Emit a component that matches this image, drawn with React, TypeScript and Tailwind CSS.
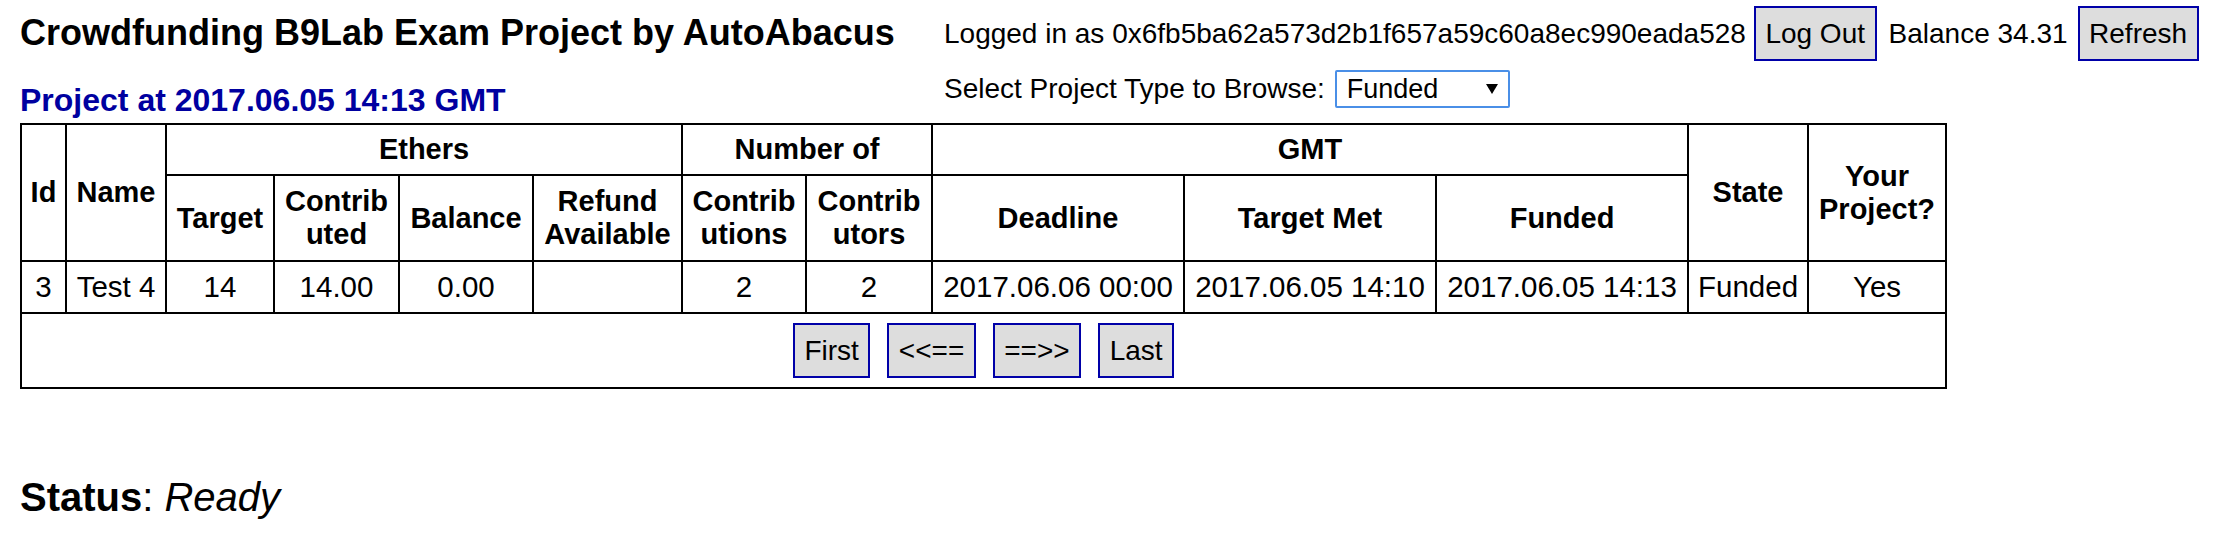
import React from 'react'

const FONT = "font-['Liberation_Sans',Arial,Helvetica,sans-serif]"

function Btn({ children }: { children: React.ReactNode }) {
  return (
    <button className="bg-[#dddddd] border-2 border-[#0000a8] px-[9.5px] py-[9.5px] leading-[32px] text-[28px] text-black">
      {children}
    </button>
  )
}

const cell = 'border-2 border-black text-center align-middle px-[2px] py-0 whitespace-nowrap text-[29.5px]'
const head = 'border-2 border-black text-center align-middle px-[2px] py-0 whitespace-nowrap text-[29px] font-bold'

export default function App() {
  return (
    <div className={`${FONT} text-[28px] leading-[normal] text-black bg-white pl-[20px] pt-[6px] pb-[40px]`}>
      {/* top: title on the left, account + browse on the right */}
      <div className="flex">
        <div className="w-[924px] shrink-0">
          <h1 className="mt-[6px] text-[36px] font-bold leading-[normal]">
            Crowdfunding B9Lab Exam Project by AutoAbacus
          </h1>
          <h2 className="mt-[28px] text-[32px] font-bold leading-[normal] text-[#0000a0]">
            Project at 2017.06.05 14:13 GMT
          </h2>
        </div>
        <div className="flex flex-col">
          <div className="flex items-baseline whitespace-nowrap">
            <span>Logged in as 0x6fb5ba62a573d2b1f657a59c60a8ec990eada528</span>
            <span className="ml-[8px]"><Btn>Log Out</Btn></span>
            <span className="ml-[12px]">Balance 34.31</span>
            <span className="ml-[10px]"><Btn>Refresh</Btn></span>
          </div>
          <div className="mt-[9px] flex items-baseline whitespace-nowrap">
            <span>Select Project Type to Browse:</span>
            <div className="ml-[10px] inline-flex items-center h-[38px] w-[175px] border-2 border-[#4a8fe7] rounded-[2px] pl-[10px] pr-[10px] text-[27px] bg-white">
              <span className="flex-1">Funded</span>
              <svg width="12" height="10" viewBox="0 0 12 10" className="shrink-0">
                <polygon points="0,0 12,0 6,10" fill="#000" />
              </svg>
            </div>
          </div>
        </div>
      </div>

      <table className="mt-[4px] table-fixed border-collapse w-[1927px] border-2 border-black">
        <colgroup>
          <col className="w-[45px]" />
          <col className="w-[100px]" />
          <col className="w-[108px]" />
          <col className="w-[125px]" />
          <col className="w-[134px]" />
          <col className="w-[149px]" />
          <col className="w-[124px]" />
          <col className="w-[126px]" />
          <col className="w-[252px]" />
          <col className="w-[252px]" />
          <col className="w-[252px]" />
          <col className="w-[120px]" />
          <col className="w-[138px]" />
        </colgroup>
        <thead>
          <tr className="h-[51px]">
            <th rowSpan={2} className={head}>Id</th>
            <th rowSpan={2} className={head}>Name</th>
            <th colSpan={4} className={head}>Ethers</th>
            <th colSpan={2} className={head}>Number of</th>
            <th colSpan={3} className={head}>GMT</th>
            <th rowSpan={2} className={head}>State</th>
            <th rowSpan={2} className={head}>Your<br />Project?</th>
          </tr>
          <tr className="h-[86px]">
            <th className={head}>Target</th>
            <th className={head}>Contrib<br />uted</th>
            <th className={head}>Balance</th>
            <th className={head}>Refund<br />Available</th>
            <th className={head}>Contrib<br />utions</th>
            <th className={head}>Contrib<br />utors</th>
            <th className={head}>Deadline</th>
            <th className={head}>Target Met</th>
            <th className={head}>Funded</th>
          </tr>
        </thead>
        <tbody>
          <tr className="h-[52px]">
            <td className={cell}>3</td>
            <td className={cell}>Test 4</td>
            <td className={cell}>14</td>
            <td className={cell}>14.00</td>
            <td className={cell}>0.00</td>
            <td className={cell}></td>
            <td className={cell}>2</td>
            <td className={cell}>2</td>
            <td className={cell}>2017.06.06 00:00</td>
            <td className={cell}>2017.06.05 14:10</td>
            <td className={cell}>2017.06.05 14:13</td>
            <td className={cell}>Funded</td>
            <td className={cell}>Yes</td>
          </tr>
          <tr className="h-[75px]">
            <td colSpan={13} className="border-2 border-black align-middle p-0">
              <div className="flex justify-center gap-[17px]">
                <Btn>First</Btn>
                <Btn>&lt;&lt;==</Btn>
                <Btn>==&gt;&gt;</Btn>
                <Btn>Last</Btn>
              </div>
            </td>
          </tr>
        </tbody>
      </table>

      <p className="mt-[86px] text-[40px] leading-[normal]">
        <b className="font-bold">Status</b>: <i className="italic">Ready</i>
      </p>
    </div>
  )
}
